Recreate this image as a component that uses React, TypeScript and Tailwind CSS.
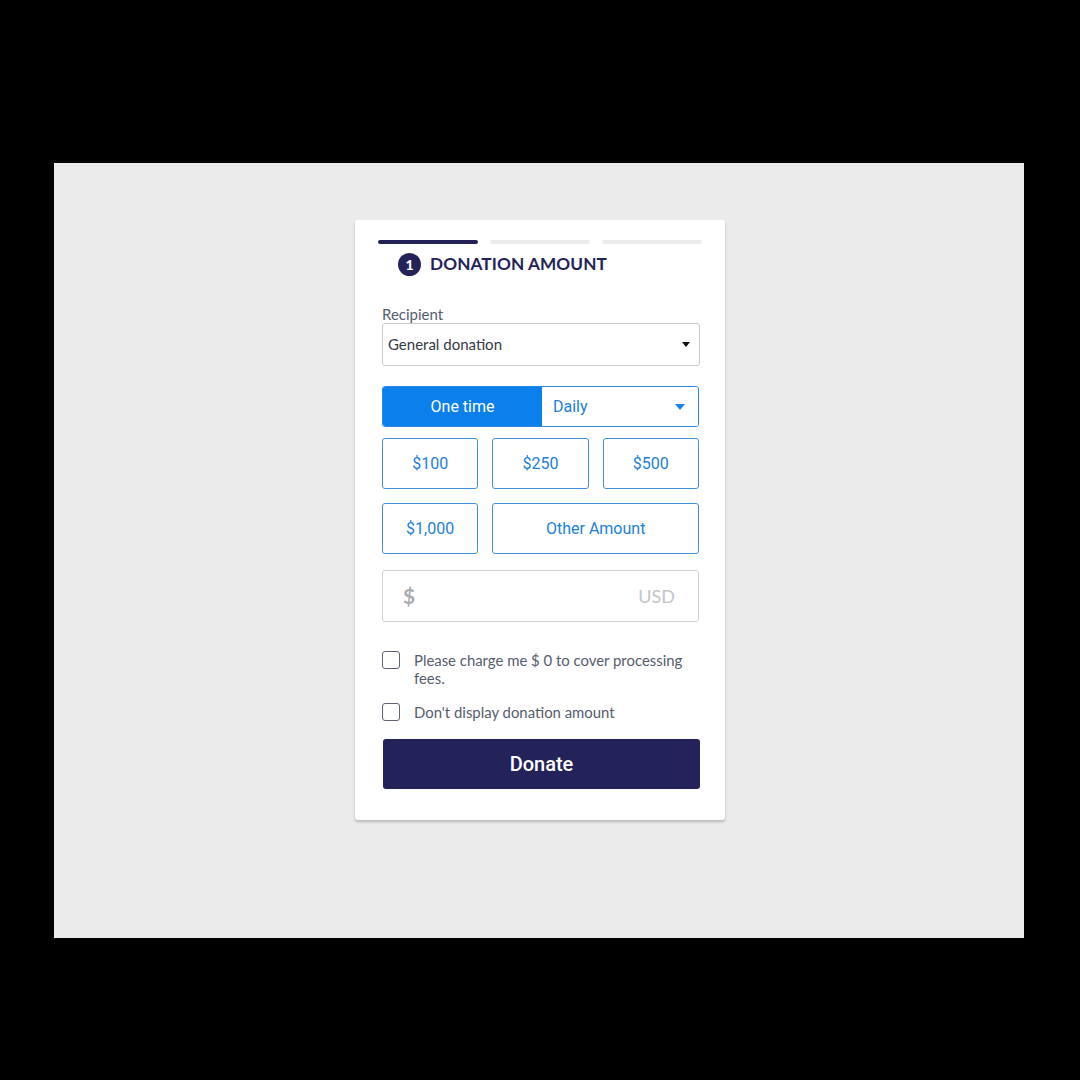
import React from "react";

const lato = { fontFamily: "Lato, 'Noto Sans', sans-serif" };
const roboto = { fontFamily: "Roboto, 'Noto Sans', sans-serif" };

function Caret({ className }: { className: string }) {
  return (
    <svg className={className} viewBox="0 0 10 6" aria-hidden>
      <path d="M0 0 L10 0 L5 6 Z" fill="currentColor" />
    </svg>
  );
}

function AmountButton({ label, wide }: { label: string; wide?: boolean }) {
  return (
    <button
      style={roboto}
      className={`h-[51px] rounded-[3px] border border-[#3f8fdc] bg-white text-[16px] text-[#1d7fd6] ${
        wide ? "col-span-2" : ""
      }`}
    >
      {label}
    </button>
  );
}

function CheckRow({ children }: { children: React.ReactNode }) {
  return (
    <label className="flex items-start gap-[14px]">
      <span className="h-[18px] w-[18px] shrink-0 rounded-[3px] border border-[#5f6470] bg-white" />
      <span style={lato} className="text-[14.9px] leading-[18px] text-[#555c6d]">
        {children}
      </span>
    </label>
  );
}

export default function App() {
  return (
    <div className="h-[1080px] w-[1080px] bg-black pl-[54px] pt-[163px]">
      <div className="flex h-[775px] w-[970px] justify-center bg-[#ebebeb] pt-[57px]">
        <div className="ml-[2px] h-[600px] w-[370px] rounded-[3px] bg-white pl-[27px] pr-[25px] pt-[20px] shadow-[0_2px_3px_rgba(0,0,0,0.22)]">
          {/* step progress */}
          <div className="-ml-[4px] flex w-[324px] gap-[12px]">
            <div className="h-[4px] flex-1 rounded-full bg-[#23235a]" />
            <div className="h-[4px] flex-1 rounded-full bg-[#ececec]" />
            <div className="h-[4px] flex-1 rounded-full bg-[#ececec]" />
          </div>

          {/* step title */}
          <div className="mt-[8px] flex h-[24px] items-center gap-[9px] pl-[16px]">
            <span
              style={lato}
              className="flex h-[23px] w-[23px] items-center justify-center rounded-full bg-[#23235a] text-[14px] font-black text-white"
            >
              1
            </span>
            <span style={lato} className="text-[17.2px] font-bold tracking-[0.1px] text-[#23235a]">
              DONATION AMOUNT
            </span>
          </div>

          {/* recipient */}
          <div style={lato} className="mt-[29px] text-[15px] leading-[18px] text-[#555c6d]">
            Recipient
          </div>
          <div className="flex h-[43px] w-[318px] items-center justify-between rounded-[3px] border border-[#c7cad3] pl-[5px] pr-[9px]">
            <span style={lato} className="text-[15px] text-[#343a46]">
              General donation
            </span>
            <Caret className="h-[5px] w-[8px] text-[#111]" />
          </div>

          {/* frequency */}
          <div className="mt-[20px] flex h-[41px] w-[317px] overflow-hidden rounded-[3px] border border-[#2a86e0]">
            <div
              style={roboto}
              className="flex w-[159px] items-center justify-center bg-[#0b7fec] text-[16px] text-white"
            >
              One time
            </div>
            <div className="flex flex-1 items-center justify-between bg-white pl-[11px] pr-[13px]">
              <span style={roboto} className="text-[16px] text-[#1d7fd6]">
                Daily
              </span>
              <Caret className="h-[6px] w-[10px] text-[#1a84e6]" />
            </div>
          </div>

          {/* preset amounts */}
          <div className="mt-[11px] grid w-[317px] grid-cols-3 gap-x-[14px] gap-y-[14px]">
            <AmountButton label="$100" />
            <AmountButton label="$250" />
            <AmountButton label="$500" />
            <AmountButton label="$1,000" />
            <AmountButton label="Other Amount" wide />
          </div>

          {/* custom amount */}
          <div className="mt-[16px] flex h-[52px] w-[317px] items-center justify-between rounded-[3px] border border-[#ccd0d8] pl-[20px] pr-[23px]">
            <span style={lato} className="text-[21px] font-bold text-[#a9abb0]">
              $
            </span>
            <span style={lato} className="text-[18px] text-[#c3c5c9]">
              USD
            </span>
          </div>

          {/* options */}
          <div className="mt-[29px] flex flex-col gap-[16px]">
            <CheckRow>
              Please charge me $ 0 to cover processing
              <br />
              fees.
            </CheckRow>
            <CheckRow>Don't display donation amount</CheckRow>
          </div>

          <button
            style={roboto}
            className="ml-[1px] mt-[18px] h-[50px] w-[317px] rounded-[3px] bg-[#23235a] text-[20px] font-medium text-white"
          >
            Donate
          </button>
        </div>
      </div>
    </div>
  );
}
